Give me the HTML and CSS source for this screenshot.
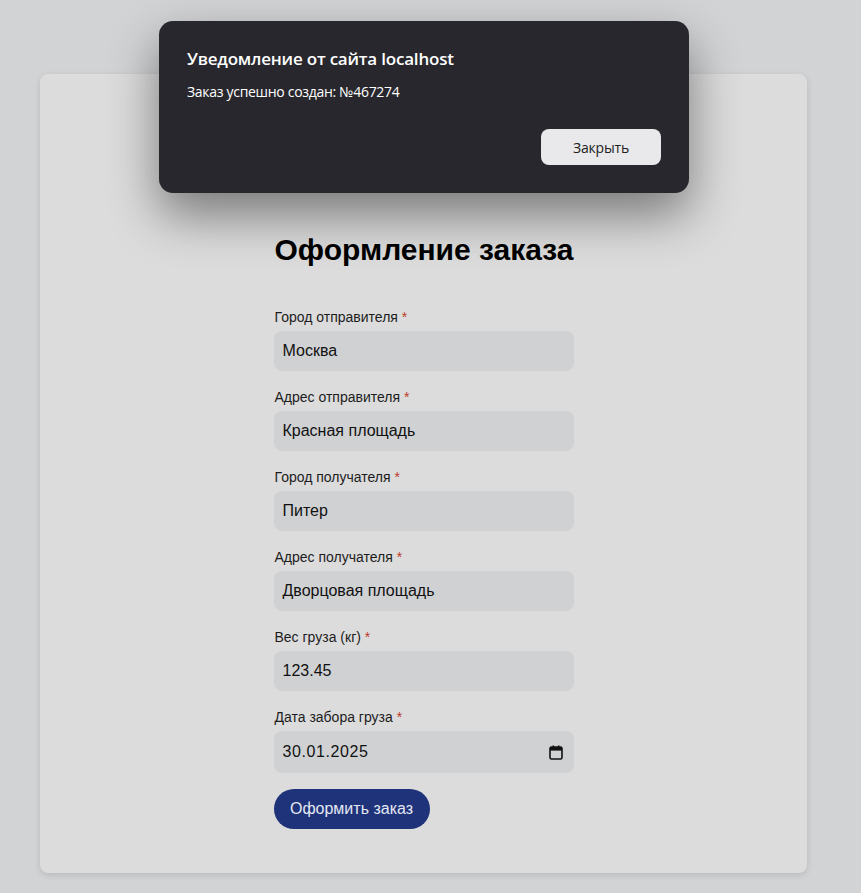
FILE: index.html
```html
<!DOCTYPE html>
<html lang="ru">
<head>
<meta charset="utf-8">
<title>Оформление заказа</title>
<link rel="stylesheet" href="styles.css">
</head>
<body>
<main class="card">
  <form class="order-form">
    <h1 class="title">Оформление заказа</h1>
    <div class="field">
      <label class="label">Город отправителя <span class="req">*</span></label>
      <div class="input">Москва</div>
    </div>
    <div class="field">
      <label class="label">Адрес отправителя <span class="req">*</span></label>
      <div class="input">Красная площадь</div>
    </div>
    <div class="field">
      <label class="label">Город получателя <span class="req">*</span></label>
      <div class="input">Питер</div>
    </div>
    <div class="field">
      <label class="label">Адрес получателя <span class="req">*</span></label>
      <div class="input">Дворцовая площадь</div>
    </div>
    <div class="field">
      <label class="label">Вес груза (кг) <span class="req">*</span></label>
      <div class="input">123.45</div>
    </div>
    <div class="field">
      <label class="label">Дата забора груза <span class="req">*</span></label>
      <div class="input input-date">
        <span class="date-text">30.01.2025</span>
        <svg class="cal" width="14" height="15" viewBox="0 0 14 15" aria-hidden="true">
          <rect x="1" y="2" width="12" height="12" rx="1.5" fill="none" stroke="#111" stroke-width="1.6"/>
          <rect x="1" y="2" width="12" height="3.6" fill="#111"/>
          <rect x="3.5" y="0.5" width="1.6" height="3" fill="#111"/>
          <rect x="8.9" y="0.5" width="1.6" height="3" fill="#111"/>
        </svg>
      </div>
    </div>
    <button type="button" class="submit">Оформить заказ</button>
  </form>
</main>

<div class="dialog" role="dialog">
  <div class="dialog-title">Уведомление от сайта localhost</div>
  <div class="dialog-msg">Заказ успешно создан: №467274</div>
  <div class="dialog-actions">
    <button type="button" class="dialog-btn">Закрыть</button>
  </div>
</div>
</body>
</html>
```

FILE: styles.css
```css
* { box-sizing: border-box; }

html, body {
  margin: 0;
  padding: 0;
}

body {
  background: #d2d3d5;
  font-family: "Liberation Sans", Arial, sans-serif;
  color: #111;
  min-height: 893px;
  padding-top: 74px;
}

.card {
  margin-left: 40px;
  width: 767px;
  height: 799px;
  background: #dcdcdc;
  border-radius: 8px;
  box-shadow: 0 2px 6px rgba(0, 0, 0, 0.12);
  padding-top: 159px;
  display: flex;
  justify-content: center;
}

.order-form {
  width: 300px;
  display: flex;
  flex-direction: column;
}

.title {
  font-size: 30px;
  font-weight: bold;
  line-height: 34px;
  white-space: nowrap;
  margin: 0 0 42px 1px;
  color: #000;
}

.field {
  display: flex;
  flex-direction: column;
  margin-bottom: 18px;
}

.label {
  font-size: 14px;
  line-height: 16px;
  margin-bottom: 6px;
  margin-left: 1px;
  color: #1c1c1c;
}

.req { color: #c0392b; }

.input {
  height: 40px;
  background: #d0d1d3;
  border-radius: 8px;
  padding: 0 9px;
  display: flex;
  align-items: center;
  font-size: 16px;
  color: #111;
}

.input-date {
  height: 42px;
  justify-content: space-between;
  padding-right: 11px;
}

.date-text { letter-spacing: 0.6px; }

.cal { display: block; }

.submit {
  align-self: flex-start;
  height: 40px;
  width: 156px;
  border: none;
  border-radius: 20px;
  background: #1f337a;
  color: #e4e8f4;
  font-family: "Liberation Sans", Arial, sans-serif;
  font-size: 16px;
  padding: 0;
  margin-top: -2px;
}

.dialog {
  position: absolute;
  left: 159px;
  top: 21px;
  width: 530px;
  height: 172px;
  background: #28272d;
  border-radius: 14px;
  box-shadow: 0 22px 50px rgba(0, 0, 0, 0.45);
  padding: 26px 28px 28px 28px;
  font-family: "Open Sans", "Noto Sans", sans-serif;
  color: #fff;
  display: flex;
  flex-direction: column;
}

.dialog-title {
  font-size: 17px;
  font-weight: 600;
  line-height: 24px;
  letter-spacing: -0.2px;
}

.dialog-msg {
  font-size: 14px;
  line-height: 18px;
  margin-top: 12px;
  letter-spacing: -0.3px;
}

.dialog-actions {
  margin-top: auto;
  display: flex;
  justify-content: flex-end;
}

.dialog-btn {
  width: 120px;
  height: 36px;
  border: none;
  border-radius: 8px;
  background: #e9e9eb;
  color: #222;
  font-family: "Open Sans", "Noto Sans", sans-serif;
  font-size: 14px;
  letter-spacing: -0.2px;
}
```
